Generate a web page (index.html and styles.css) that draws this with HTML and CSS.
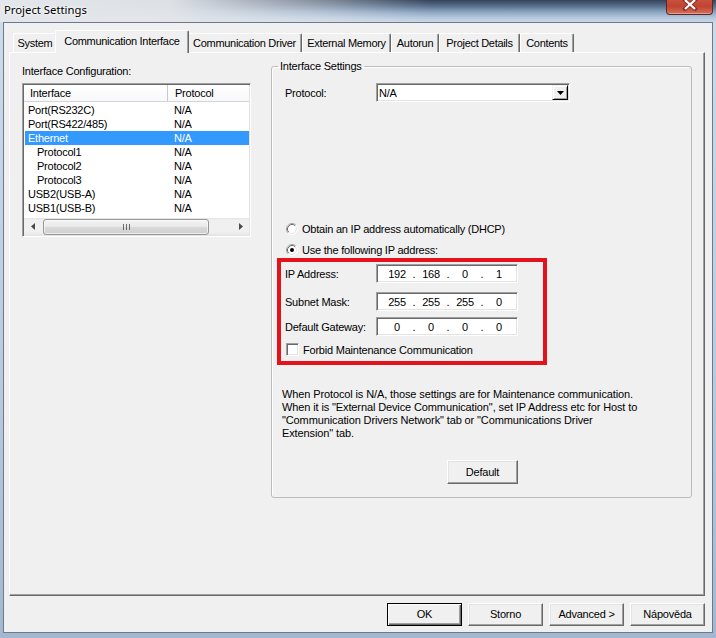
FILE: index.html
```html
<!DOCTYPE html>
<html>
<head>
<meta charset="utf-8">
<title>Project Settings</title>
<link rel="stylesheet" href="styles.css">
</head>
<body>
<div class="window">
  <div class="titlebar">
    <span class="title">Project Settings</span>
    <div class="close">
      <svg width="16" height="11" viewBox="0 0 16 11"><path d="M3 0 L13 9 M13 0 L3 9" stroke="#5a1a10" stroke-width="4" stroke-linecap="square" opacity="0.55"/><path d="M3 0 L13 9 M13 0 L3 9" stroke="#ffffff" stroke-width="2.2"/></svg>
    </div>
  </div>
  <div class="client">
    <div class="tabs">
      <div class="tab w-system">System</div>
      <div class="tab active w-ci">Communication Interface</div>
      <div class="tab w-cd">Communication Driver</div>
      <div class="tab w-em">External Memory</div>
      <div class="tab w-ar">Autorun</div>
      <div class="tab w-pd">Project Details</div>
      <div class="tab w-ct">Contents</div>
    </div>
    <div class="panel">
      <div class="leftcol">
        <div class="lbl">Interface Configuration:</div>
        <div class="listview">
          <div class="lv-head">
            <div class="h1">Interface</div>
            <div class="h2">Protocol</div>
          </div>
          <div class="lv-body">
            <div class="row"><span class="c1">Port(RS232C)</span><span class="c2">N/A</span></div>
            <div class="row"><span class="c1">Port(RS422/485)</span><span class="c2">N/A</span></div>
            <div class="row sel"><span class="c1">Ethernet</span><span class="c2">N/A</span></div>
            <div class="row sub"><span class="c1">Protocol1</span><span class="c2">N/A</span></div>
            <div class="row sub"><span class="c1">Protocol2</span><span class="c2">N/A</span></div>
            <div class="row sub"><span class="c1">Protocol3</span><span class="c2">N/A</span></div>
            <div class="row"><span class="c1">USB2(USB-A)</span><span class="c2">N/A</span></div>
            <div class="row"><span class="c1">USB1(USB-B)</span><span class="c2">N/A</span></div>
          </div>
          <div class="hscroll">
            <div class="sbtn"><svg width="4" height="7" viewBox="0 0 4 7"><polygon points="4,0 4,7 0,3.5" fill="#4a4a4a"/></svg></div>
            <div class="track">
              <div class="thumb"><span class="grip"></span><span class="grip"></span><span class="grip"></span></div>
            </div>
            <div class="sbtn"><svg width="4" height="7" viewBox="0 0 4 7"><polygon points="0,0 0,7 4,3.5" fill="#4a4a4a"/></svg></div>
          </div>
        </div>
      </div>
      <fieldset class="group">
        <legend>Interface Settings</legend>
        <div class="gbody">
          <div class="protorow">
            <span class="plabel">Protocol:</span>
            <div class="combo">
              <span class="combo-text">N/A</span>
              <div class="combo-btn"><svg width="7" height="4" viewBox="0 0 7 4"><polygon points="0,0 7,0 3.5,4" fill="#000"/></svg></div>
            </div>
          </div>
          <div class="radiorow r1">
            <svg class="radio" width="12" height="12" viewBox="0 0 12 12"><circle cx="6" cy="6" r="5.5" fill="#fff"/><path d="M2.11 9.89 A5.5 5.5 0 0 1 9.89 2.11" fill="none" stroke="#a0a0a0"/><path d="M2.82 9.18 A4.5 4.5 0 0 1 9.18 2.82" fill="none" stroke="#696969"/><path d="M9.89 2.11 A5.5 5.5 0 0 1 2.11 9.89" fill="none" stroke="#ffffff"/><path d="M9.18 2.82 A4.5 4.5 0 0 1 2.82 9.18" fill="none" stroke="#e3e3e3"/></svg>
            <span>Obtain an IP address automatically (DHCP)</span>
          </div>
          <div class="radiorow r2">
            <svg class="radio" width="12" height="12" viewBox="0 0 12 12"><circle cx="6" cy="6" r="5.5" fill="#fff"/><path d="M2.11 9.89 A5.5 5.5 0 0 1 9.89 2.11" fill="none" stroke="#a0a0a0"/><path d="M2.82 9.18 A4.5 4.5 0 0 1 9.18 2.82" fill="none" stroke="#696969"/><path d="M9.89 2.11 A5.5 5.5 0 0 1 2.11 9.89" fill="none" stroke="#ffffff"/><path d="M9.18 2.82 A4.5 4.5 0 0 1 2.82 9.18" fill="none" stroke="#e3e3e3"/><circle cx="6" cy="6" r="2" fill="#000"/></svg>
            <span>Use the following IP address:</span>
          </div>
          <div class="redbox">
            <div class="iprow ip1">
              <span class="iplabel">IP Address:</span>
              <div class="ipfield"><span class="seg">192</span><span class="dot">.</span><span class="seg">168</span><span class="dot">.</span><span class="seg">0</span><span class="dot">.</span><span class="seg">1</span></div>
            </div>
            <div class="iprow ip2">
              <span class="iplabel">Subnet Mask:</span>
              <div class="ipfield"><span class="seg">255</span><span class="dot">.</span><span class="seg">255</span><span class="dot">.</span><span class="seg">255</span><span class="dot">.</span><span class="seg">0</span></div>
            </div>
            <div class="iprow ip3">
              <span class="iplabel">Default Gateway:</span>
              <div class="ipfield"><span class="seg">0</span><span class="dot">.</span><span class="seg">0</span><span class="dot">.</span><span class="seg">0</span><span class="dot">.</span><span class="seg">0</span></div>
            </div>
            <div class="checkrow">
              <span class="checkbox"></span>
              <span>Forbid Maintenance Communication</span>
            </div>
          </div>
          <p class="desc">When Protocol is N/A, those settings are for Maintenance communication.<br>When it is "External Device Communication", set IP Address etc for Host to<br>"Communication Drivers Network" tab or "Communications Driver<br>Extension" tab.</p>
          <div class="btn default-btn">Default</div>
        </div>
      </fieldset>
    </div>
    <div class="buttons">
      <div class="btn okbtn">OK</div>
      <div class="btn">Storno</div>
      <div class="btn">Advanced &gt;</div>
      <div class="btn">Nápověda</div>
    </div>
  </div>
</div>
</body>
</html>
```
FILE: styles.css
```css
* { box-sizing: border-box; }
html, body { margin: 0; padding: 0; }
body {
  width: 716px;
  height: 638px;
  overflow: hidden;
  font-family: "Liberation Sans", Arial, sans-serif;
  font-size: 11px;
  letter-spacing: -0.22px;
  color: #000;
  background: #a9bdd4;
}
.window {
  width: 716px;
  height: 638px;
  display: flex;
  flex-direction: column;
  background: linear-gradient(to bottom, #cfdbe8 0%, #b9cadd 60%, #a3b7cf 100%);
}
.titlebar {
  height: 22px;
  flex: none;
  display: flex;
  justify-content: space-between;
  align-items: flex-start;
  padding-left: 4px;
  background:
    linear-gradient(to right, #e3e6ea 0px, rgba(227,230,234,0.96) 170px, rgba(227,230,234,0.45) 320px, rgba(227,230,234,0) 430px),
    linear-gradient(to bottom, #34435a 0px, #586e8a 6px, #8ba5c2 12px, #b6c9de 18px, #c9d7e6 22px);
}
.title {
  font-family: "Noto Sans", "Open Sans", sans-serif;
  font-size: 11.3px;
  letter-spacing: 0;
  line-height: 20px;
  color: #000;
  text-shadow: 0 0 5px #fff, 0 0 3px #fff;
}
.close {
  width: 47px;
  height: 15px;
  margin-right: 3px;
  border: 1px solid #5a2a22;
  border-top: none;
  border-radius: 0 0 4px 4px;
  background: linear-gradient(to bottom, #c8523d 0%, #c0432f 45%, #d4705c 100%);
  box-shadow: inset 0 -1px 0 rgba(255,255,255,0.35);
  display: flex;
  justify-content: center;
  align-items: flex-start;
}
.close svg { display: block; }
.client {
  flex: 1;
  margin: 0 3px 5px;
  border: 1px solid #6b7b8f;
  background: #f0f0f0;
  display: flex;
  flex-direction: column;
}
/* tabs */
.tabs {
  height: 29px;
  flex: none;
  padding-top: 7px;
  padding-left: 9px;
  display: flex;
  align-items: flex-end;
}
.tab {
  height: 19px;
  line-height: 18px;
  text-align: center;
  white-space: nowrap;
  letter-spacing: -0.3px;
  border-top: 1px solid #ffffff;
  border-left: 1px solid #ffffff;
  border-right: 1px solid #696969;
  box-shadow: inset -1px 0 #a0a0a0;
  border-radius: 2px 2px 0 0;
  background: #f0f0f0;
}
.tab.active {
  height: 23px;
  line-height: 20px;
  margin: 0 -2px -1px;
  position: relative;
  z-index: 1;
}
.w-system { width: 44px; }
.w-ci { width: 134px; }
.w-cd { width: 115px; }
.w-em { width: 89px; }
.w-ar { width: 48px; }
.w-pd { width: 81px; }
.w-ct { width: 54px; }
/* panel */
.panel {
  margin-left: 5px;
  width: 696px;
  height: 544px;
  flex: none;
  border: 1px solid;
  border-color: #ffffff #696969 #696969 #ffffff;
  box-shadow: inset -1px -1px #a0a0a0;
  padding: 6px 0 0 12px;
  display: flex;
  align-items: flex-start;
  gap: 20px;
}
.leftcol {
  width: 229px;
  padding-top: 5px;
}
.lbl { line-height: 14px; }
.listview {
  margin-top: 5px;
  width: 229px;
  height: 154px;
  background: #fff;
  border: 1px solid;
  border-color: #a0a0a0 #ffffff #ffffff #a0a0a0;
  box-shadow: inset 1px 1px #696969, inset -1px -1px #e3e3e3;
  padding: 1px;
  display: flex;
  flex-direction: column;
}
.lv-head {
  height: 17px;
  flex: none;
  display: flex;
  border-bottom: 1px solid #d5d5d5;
  line-height: 16px;
  background: linear-gradient(to bottom, #ffffff, #f7f8fa);
}
.h1 { width: 144px; padding-left: 6px; border-right: 1px solid #c8c8c8; }
.h2 { padding-left: 7px; flex: 1; }
.lv-body { flex: 1; padding-top: 1px; }
.row {
  height: 14px;
  line-height: 14px;
  margin-left: 1px;
  display: flex;
  white-space: nowrap;
}
.row .c1 { width: 149px; padding-left: 3px; }
.row.sub .c1 { padding-left: 12px; }
.row.sel { background: #3399ff; color: #fff; }
.hscroll {
  height: 17px;
  flex: none;
  display: flex;
  background: linear-gradient(to bottom, #e3e3e3 0px, #f0f0f0 2px, #f0f0f0 14px, #e6e6e6 17px);
}
.sbtn {
  width: 17px;
  height: 17px;
  display: flex;
  align-items: center;
  justify-content: center;
}
.track { flex: 1; display: flex; align-items: center; }
.thumb {
  margin-left: 2px;
  width: 166px;
  height: 16px;
  border: 1px solid #979797;
  border-radius: 3px;
  background: linear-gradient(to bottom, #f4f4f4 0%, #e8e8e8 50%, #d9d9d9 51%, #cfcfcf 100%);
  box-shadow: inset 0 0 0 1px rgba(255,255,255,0.6);
  display: flex;
  justify-content: center;
  align-items: center;
  gap: 2px;
}
.grip { width: 1px; height: 6px; background: #6a6a6a; }
/* group */
.group {
  margin: 0;
  padding: 0;
  min-width: 0;
  width: 421px;
  height: 439px;
  border: 1px solid #bcbcbc;
  border-radius: 3px;
  box-shadow: inset 1px 1px #ffffff;
}
.group legend {
  margin-left: 6px;
  padding: 0 2px;
  line-height: 14px;
}
.gbody { padding-left: 13px; }
.protorow {
  margin-top: 10px;
  height: 19px;
  display: flex;
  align-items: center;
}
.plabel { width: 91px; }
.combo {
  width: 194px;
  height: 19px;
  background: #fff;
  border: 1px solid;
  border-color: #a0a0a0 #ffffff #ffffff #a0a0a0;
  box-shadow: inset 1px 1px #696969, inset -1px -1px #e3e3e3;
  display: flex;
  align-items: center;
  padding: 0 1px 0 2px;
}
.combo-text { flex: 1; }
.combo-btn {
  width: 16px;
  height: 15px;
  background: #f0f0f0;
  border: 1px solid;
  border-color: #f0f0f0 #000000 #000000 #f0f0f0;
  box-shadow: inset 1px 1px #ffffff, inset -1px -1px #a0a0a0;
  display: flex;
  align-items: center;
  justify-content: center;
}
.combo-btn svg { display: block; }
.radiorow {
  height: 14px;
  display: flex;
  align-items: center;
  gap: 4px;
  padding-left: 1px;
}
.r1 { margin-top: 120px; }
.r2 { margin-top: 7px; }
.radio { display: block; flex: none; }
.redbox {
  margin-top: 1px;
  margin-left: -8px;
  width: 270px;
  border: 4px solid #e3121b;
  padding: 2px 0 5px 4px;
}
.iprow {
  height: 19px;
  display: flex;
  align-items: center;
}
.ip2 { margin-top: 9px; }
.ip3 { margin-top: 6px; }
.iplabel { width: 91px; white-space: nowrap; }
.ipfield {
  width: 142px;
  height: 19px;
  background: #fff;
  border: 1px solid;
  border-color: #a0a0a0 #ffffff #ffffff #a0a0a0;
  box-shadow: inset 1px 1px #696969, inset -1px -1px #e3e3e3;
  padding-left: 6px;
  display: flex;
  align-items: center;
}
.seg { width: 28px; text-align: center; }
.dot { width: 6px; text-align: center; }
.checkrow {
  margin-top: 7px;
  height: 13px;
  display: flex;
  align-items: center;
  gap: 4px;
  padding-left: 1px;
}
.checkbox {
  width: 13px;
  height: 13px;
  flex: none;
  background: #fff;
  border: 1px solid;
  border-color: #a0a0a0 #ffffff #ffffff #a0a0a0;
  box-shadow: inset 1px 1px #696969, inset -1px -1px #e3e3e3;
}
.desc {
  margin: 23px 0 0 -3px;
  line-height: 13px;
  letter-spacing: -0.12px;
  white-space: nowrap;
}
.btn {
  width: 75px;
  height: 23px;
  line-height: 21px;
  text-align: center;
  background: #f0f0f0;
  border: 1px solid;
  border-color: #ffffff #696969 #696969 #ffffff;
  box-shadow: inset -1px -1px #a0a0a0, inset 1px 1px #e3e3e3;
}
.default-btn {
  margin-top: 20px;
  margin-left: 162px;
  width: 71px;
  height: 24px;
  line-height: 22px;
}
.okbtn {
  border-color: #000000;
  box-shadow: inset 1px 1px #ffffff, inset -1px -1px #696969, inset -2px -2px #a0a0a0;
}
.buttons {
  margin-top: 7px;
  padding-right: 7px;
  display: flex;
  justify-content: flex-end;
  gap: 6px;
}
```
